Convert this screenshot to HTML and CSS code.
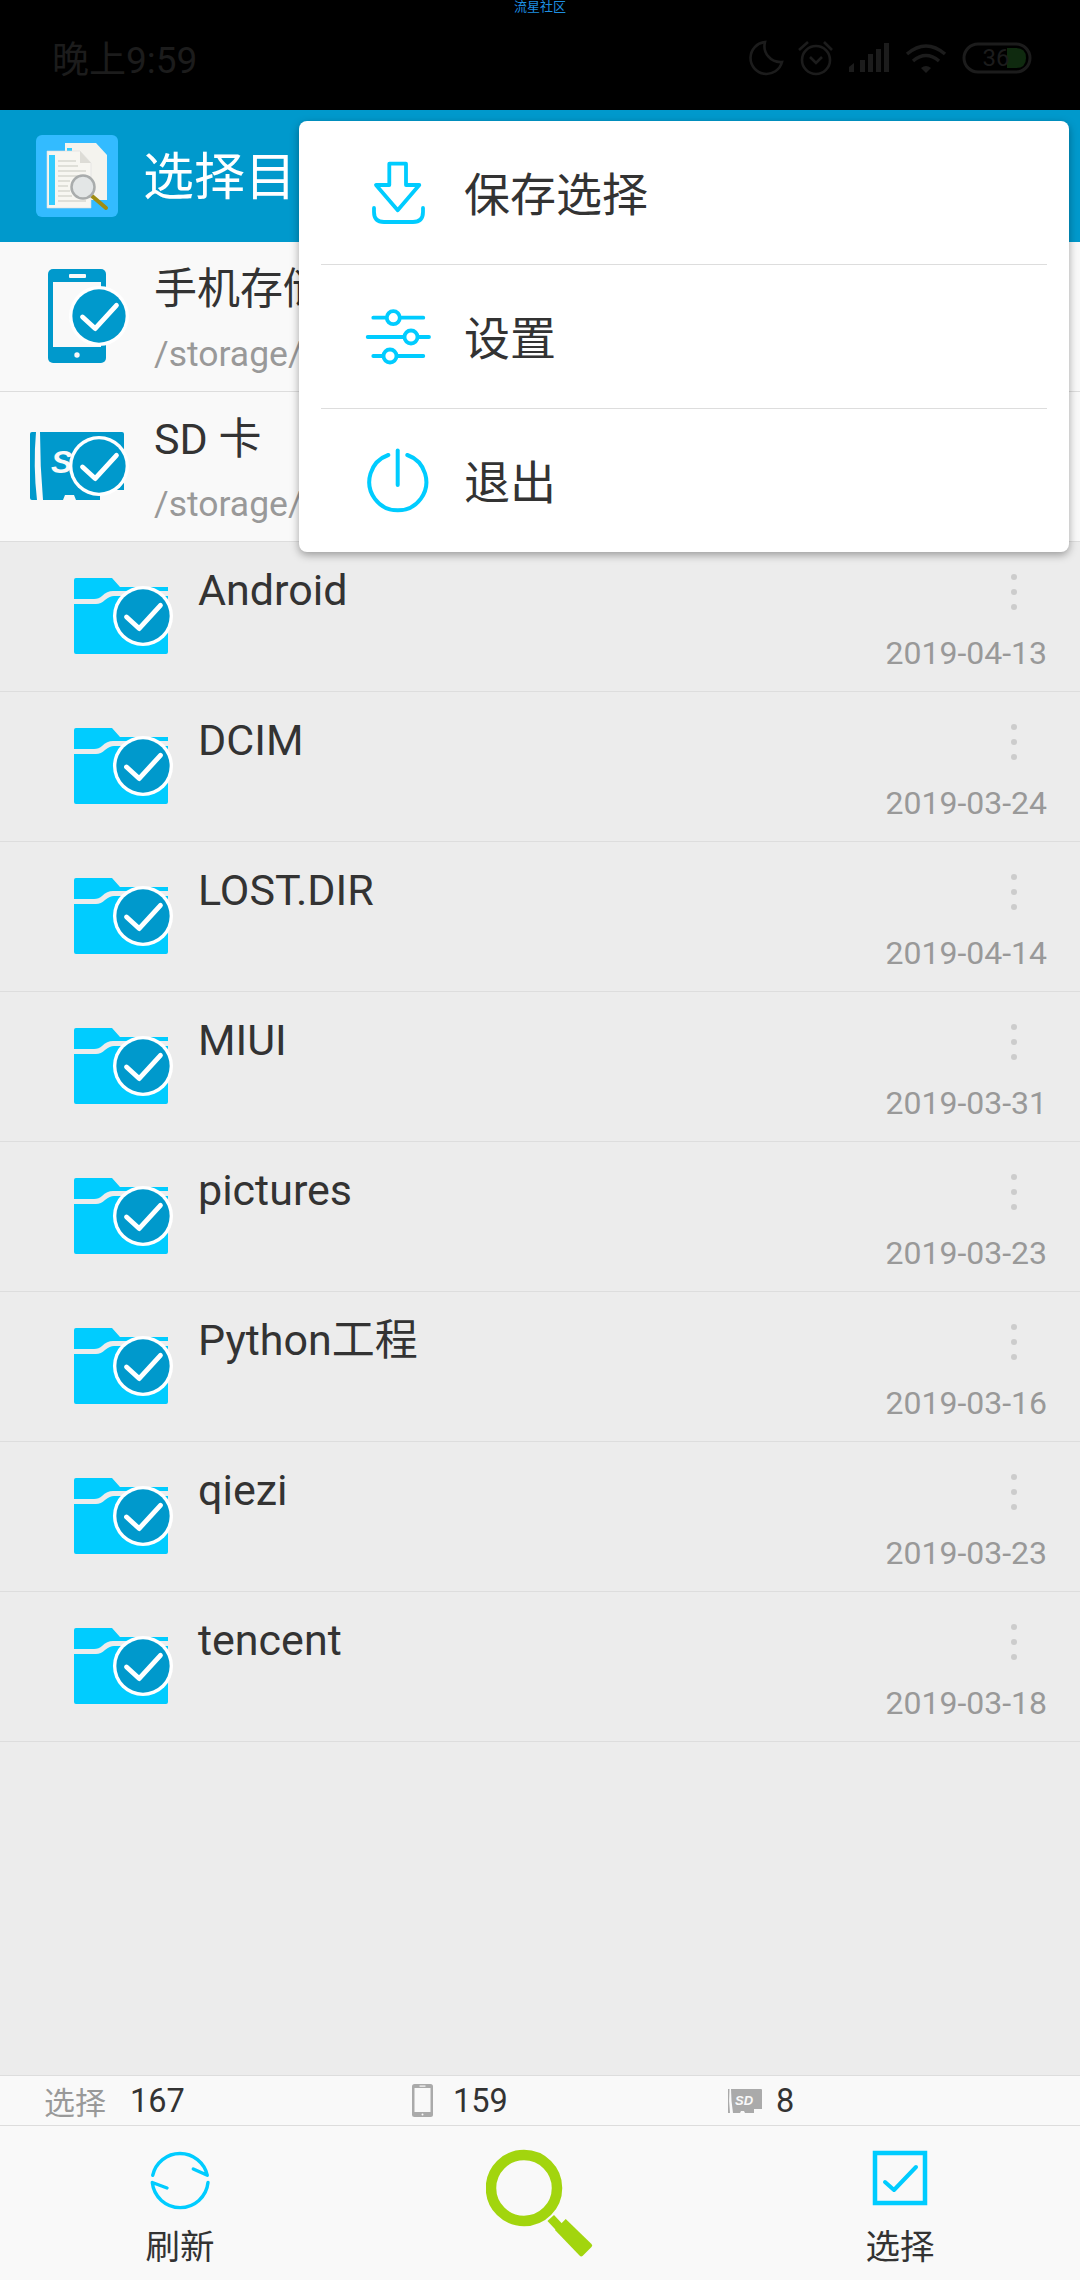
FILE: index.html
```html
<!DOCTYPE html>
<html lang="zh">
    <head>
        <meta charset="UTF-8">
        <meta name="viewport" content="width=device-width, initial-scale=1.0">
        <title>选择目录</title>
        <link rel="stylesheet" href="styles.css">
    </head>
    <body>
        <svg class="defs" width="0" height="0">
            <symbol id="badge" viewBox="-32 -32 64 64">
                <circle r="31" fill="#fff"/>
                <circle r="27.5" fill="#0099cc"/>
                <path d="M-17 1L-4 13L18-11" fill="none" stroke="#fff" stroke-width="5" stroke-linecap="round" stroke-linejoin="round"/>
            </symbol>
            <symbol id="folder" viewBox="0 0 100 76">
                <path d="M0 2Q0 0 2 0H38L46 9H94V13H39Q33 13 28 18Q25 21 20 21H0Z" fill="#00ccff"/>
                <path d="M0 26H22Q27 26 31 22Q36 18 40 18H94V74Q94 76 92 76H2Q0 76 0 74Z" fill="#00ccff"/>
                <use href="#badge" x="38" y="7" width="62" height="62"/>
            </symbol>
            <symbol id="dots" viewBox="0 0 6 36">
                <circle cx="3" cy="3" r="3" fill="#ccc"/>
                <circle cx="3" cy="18" r="3" fill="#ccc"/>
                <circle cx="3" cy="33" r="3" fill="#ccc"/>
            </symbol>
        </svg>

        <!--Status bar-->
        <div class="statusbar">
            <div class="carrier">流星社区</div>
            <div class="status-row">
                <span class="clock">晚上9:59</span>
                <svg class="status-icons" width="320" height="60" viewBox="0 0 320 60">
                    <g fill="none" stroke="#1c1c1c" stroke-width="2.6">
                        <path d="M35 12A16 16 0 1 0 52 32A16 16 0 0 1 35 12Z"/>
                        <circle cx="86" cy="30" r="14"/>
                        <path d="M69 20L78 12M94 12L102 20M80 27L86 33L92 27"/>
                        <path d="M177 24Q196 8 215 24M183 31Q196 20 209 31" stroke-width="3.5"/>
                        <rect x="234" y="14" width="66" height="28" rx="14" stroke-width="3"/>
                    </g>
                    <g fill="#1c1c1c">
                        <path d="M119 42V37L124 33V42Z"/>
                        <rect x="130" y="30" width="5" height="12"/>
                        <rect x="138" y="24" width="5" height="18"/>
                        <rect x="146" y="19" width="5" height="23"/>
                        <rect x="154" y="13" width="5" height="29"/>
                        <path d="M191 38L196 43L201 38Q196 34 191 38Z"/>
                    </g>
                    <path d="M277 18H286Q296 18 296 28Q296 38 286 38H277Z" fill="#0f2a0f"/>
                    <text x="266" y="36" class="battery-text">36</text>
                </svg>
            </div>
        </div>

        <!--Header-->
        <header class="header">
            <svg class="app-icon" width="82" height="82" viewBox="0 0 82 82">
                <rect width="82" height="82" rx="6" fill="#33bbff"/>
                <path d="M29 8H60L71 20V65H29Z" fill="#f4f3ee"/>
                <rect x="31" y="13" width="5" height="10" fill="#33ccff"/>
                <path d="M11 16H44L55 28V73H11Z" fill="#f7f6f1" stroke="#ddd" stroke-width=".6"/>
                <path d="M44 16V28H55Z" fill="#dddcd6"/>
                <rect x="13" y="20" width="6" height="50" fill="#33ccff"/>
                <path d="M22 26H40M22 31H42M22 36H50M22 41H50M22 46H34M22 51H32M22 56H34M22 61H36M22 66H50" stroke="#d8d7d0" stroke-width="1.5"/>
                <path d="M56 61L70 73" stroke="#a08c10" stroke-width="4" stroke-linecap="round"/>
                <circle cx="47" cy="52" r="11.5" fill="#dfe3e4" fill-opacity=".85" stroke="#a9acac" stroke-width="2.5"/>
            </svg>
            <span class="title">选择目录</span>
        </header>

        <!--Storage roots-->
        <div class="drive">
            <svg class="drive-icon" width="100" height="96" viewBox="0 0 100 96">
                <rect x="18" y="1" width="58" height="94" rx="5" fill="#0099cc"/>
                <rect x="23" y="14" width="48" height="65" fill="#f9f9f9"/>
                <rect x="39" y="6" width="17" height="4" rx="1" fill="#f9f9f9"/>
                <circle cx="47" cy="87" r="2.7" fill="#f9f9f9"/>
                <use href="#badge" x="38" y="17" width="62" height="62"/>
            </svg>
            <div class="drive-text">
                <div class="name">手机存储</div>
                <div class="path">/storage/emulated/0</div>
            </div>
        </div>
        <div class="drive">
            <svg class="drive-icon" width="100" height="96" viewBox="0 0 100 96">
                <path d="M2 14H6Q3 48 7 82H2Q0 82 0 80V16Q0 14 2 14Z" fill="#0099cc"/>
                <path d="M10 14H92Q94 14 94 16V72H70V82H46L44 77H35L33 82H13Q10 48 10 14Z" fill="#0099cc"/>
                <text x="21" y="55" class="sd-text">SD</text>
                <use href="#badge" x="38" y="17" width="62" height="62"/>
            </svg>
            <div class="drive-text">
                <div class="name">SD 卡</div>
                <div class="path">/storage/sdcard1</div>
            </div>
        </div>

        <!--Folder list-->
        <div class="list">
            <div class="row">
                <svg class="folder-icon"><use href="#folder"/></svg>
                <div class="name">Android</div>
                <div class="meta"><svg class="dots"><use href="#dots"/></svg><span class="date">2019-04-13</span></div>
            </div>
            <div class="row">
                <svg class="folder-icon"><use href="#folder"/></svg>
                <div class="name">DCIM</div>
                <div class="meta"><svg class="dots"><use href="#dots"/></svg><span class="date">2019-03-24</span></div>
            </div>
            <div class="row">
                <svg class="folder-icon"><use href="#folder"/></svg>
                <div class="name">LOST.DIR</div>
                <div class="meta"><svg class="dots"><use href="#dots"/></svg><span class="date">2019-04-14</span></div>
            </div>
            <div class="row">
                <svg class="folder-icon"><use href="#folder"/></svg>
                <div class="name">MIUI</div>
                <div class="meta"><svg class="dots"><use href="#dots"/></svg><span class="date">2019-03-31</span></div>
            </div>
            <div class="row">
                <svg class="folder-icon"><use href="#folder"/></svg>
                <div class="name">pictures</div>
                <div class="meta"><svg class="dots"><use href="#dots"/></svg><span class="date">2019-03-23</span></div>
            </div>
            <div class="row">
                <svg class="folder-icon"><use href="#folder"/></svg>
                <div class="name">Python工程</div>
                <div class="meta"><svg class="dots"><use href="#dots"/></svg><span class="date">2019-03-16</span></div>
            </div>
            <div class="row">
                <svg class="folder-icon"><use href="#folder"/></svg>
                <div class="name">qiezi</div>
                <div class="meta"><svg class="dots"><use href="#dots"/></svg><span class="date">2019-03-23</span></div>
            </div>
            <div class="row">
                <svg class="folder-icon"><use href="#folder"/></svg>
                <div class="name">tencent</div>
                <div class="meta"><svg class="dots"><use href="#dots"/></svg><span class="date">2019-03-18</span></div>
            </div>
        </div>

        <!--Counters-->
        <div class="stats">
            <div class="stat stat-first"><span class="stat-label">选择</span><span>167</span></div>
            <div class="stat">
                <svg width="21" height="33" viewBox="0 0 21 33">
                    <rect width="21" height="33" rx="2.5" fill="#aaa"/>
                    <rect x="2.5" y="4" width="16" height="24" fill="#f9f9f9"/>
                    <rect x="7.5" y="1.5" width="6" height="1.2" fill="#f9f9f9"/>
                    <circle cx="10.5" cy="30.5" r="1" fill="#f9f9f9"/>
                </svg>
                <span>159</span>
            </div>
            <div class="stat stat-sd">
                <svg width="34" height="26" viewBox="0 0 34 26">
                    <path d="M0 1H1.5Q.5 12 2 25H0Z" fill="#aaa"/>
                    <path d="M3 1H33Q34 1 34 2V21H26V25H17L16 23H13L12 25H5Q3 12 3 1Z" fill="#aaa"/>
                    <text x="7" y="17" class="sd-small">SD</text>
                </svg>
                <span>8</span>
            </div>
        </div>

        <!--Bottom buttons-->
        <nav class="toolbar">
            <div class="tool">
                <svg width="66" height="66" viewBox="0 0 66 66" fill="none" stroke="#00ccff" stroke-width="3.4" stroke-linecap="round" stroke-linejoin="round">
                    <path d="M5.7 30.3A28 28 0 0 1 60.3 30.3L46.3 24"/>
                    <path d="M61 37.5A28 28 0 0 1 5.3 37.5L20 43"/>
                </svg>
                <span class="tool-label">刷新</span>
            </div>
            <div class="tool tool-search">
                <svg width="108" height="108" viewBox="0 0 108 108">
                    <circle cx="38" cy="39" r="33" fill="none" stroke="#a2d50e" stroke-width="10.5"/>
                    <path d="M64.7 69L76 81" stroke="#a2d50e" stroke-width="9"/>
                    <path d="M79.7 70L105.5 95Q107 96.5 105.5 98L96.5 107Q95 108 93.5 106.5L69 81Z" fill="#a2d50e"/>
                </svg>
            </div>
            <div class="tool">
                <svg width="66" height="66" viewBox="0 0 66 66" fill="none" stroke="#00ccff" stroke-width="4">
                    <rect x="8" y="8" width="50" height="50" stroke-width="4.5"/>
                    <path d="M18 37L27 45L49 22" stroke-linecap="round" stroke-linejoin="round"/>
                </svg>
                <span class="tool-label">选择</span>
            </div>
        </nav>

        <!--Popup menu-->
        <div class="menu">
            <div class="menu-item">
                <svg width="66" height="66" viewBox="0 0 66 66" fill="none" stroke="#00ccff" stroke-width="3.8" stroke-linecap="round" stroke-linejoin="round">
                    <path d="M24.3 3.7H41V25H54.3L32.7 50.3L11 25H24.3Z"/>
                    <path d="M9 48V52Q9 62 19 62H48Q58 62 58 52V48"/>
                </svg>
                <span class="menu-label">保存选择</span>
            </div>
            <div class="menu-item">
                <svg width="66" height="66" viewBox="0 0 66 66" fill="#fff" stroke="#00ccff" stroke-width="3.8" stroke-linecap="round">
                    <path d="M8.3 13.7H58.3M2.7 33H64M8.3 52H58.3"/>
                    <circle cx="28.3" cy="13.7" r="6.5"/>
                    <circle cx="46" cy="33" r="6.5"/>
                    <circle cx="25" cy="52" r="6.5"/>
                </svg>
                <span class="menu-label">设置</span>
            </div>
            <div class="menu-item">
                <svg width="66" height="66" viewBox="0 0 66 66" fill="none" stroke="#00ccff" stroke-width="4" stroke-linecap="round">
                    <path d="M23.3 7A28.5 28.5 0 1 0 42.3 7"/>
                    <path d="M32.7 2.5V37"/>
                </svg>
                <span class="menu-label">退出</span>
            </div>
        </div>
    </body>
</html>
```

FILE: styles.css
```css
*{
    box-sizing: border-box;
}
body{
    margin: 0;
    width: 1080px;
    height: 2280px;
    display: flex;
    flex-direction: column;
    position: relative;
    overflow: hidden;
    background: #ececec;
    color: #333;
    font-family: Roboto, "Noto Sans CJK SC", sans-serif;
}
.defs{
    position: absolute;
}

/* status bar */
.statusbar{
    height: 110px;
    flex: none;
    background: #000;
}
.carrier{
    height: 14px;
    text-align: center;
    color: #1e8fe0;
    font-size: 13px;
    line-height: 13px;
}
.status-row{
    display: flex;
    justify-content: space-between;
    padding: 16px 30px 0 52px;
}
.clock{
    color: #1c1c1c;
    font-size: 37px;
    line-height: 62px;
}
.battery-text{
    fill: #1c1c1c;
    font-size: 24px;
    text-anchor: middle;
}

/* header */
.header{
    height: 132px;
    flex: none;
    display: flex;
    align-items: center;
    padding-left: 36px;
    background: #0099cc;
}
.title{
    margin-left: 25px;
    padding-top: 4px;
    color: #fff;
    font-size: 51px;
    line-height: 60px;
}

/* storage rows */
.drive{
    height: 150px;
    flex: none;
    display: flex;
    padding: 16px 0 0 30px;
    background: #f9f9f9;
    border-bottom: 1px solid #ddd;
}
.drive-icon{
    margin-top: 10px;
}
.drive-text{
    margin-left: 24px;
    padding-top: 1px;
}
.name{
    font-size: 43px;
    line-height: 60px;
}
.path{
    margin-top: 10px;
    color: #999;
    font-size: 35.5px;
    line-height: 50px;
}
.sd-text{
    fill: #f9f9f9;
    font-family: "Liberation Sans", sans-serif;
    font-size: 32px;
    font-style: italic;
    font-weight: bold;
}

/* folder rows */
.list{
    flex: 1;
}
.row{
    height: 150px;
    display: flex;
    padding: 18px 33px 0 74px;
    border-bottom: 1px solid #ddd;
}
.folder-icon{
    width: 100px;
    height: 76px;
    margin-top: 18px;
}
.row .name{
    margin-left: 24px;
}
.meta{
    margin-left: auto;
    display: flex;
    flex-direction: column;
    align-items: flex-end;
}
.dots{
    width: 6px;
    height: 36px;
    margin: 14px 30px 0 0;
}
.date{
    margin-top: 23px;
    color: #999;
    font-size: 32px;
    line-height: 40px;
}

/* counters */
.stats{
    height: 51px;
    flex: none;
    display: grid;
    grid-template-columns: 368px 316px 1fr;
    padding-left: 44px;
    background: #f9f9f9;
    border-top: 1px solid #ddd;
    border-bottom: 1px solid #ddd;
    font-size: 32.5px;
}
.stat{
    display: flex;
    align-items: center;
    gap: 20px;
}
.stat-first{
    gap: 24px;
}
.stat-sd{
    gap: 14px;
}
.stat-label{
    color: #999;
    font-size: 31px;
}
.sd-small{
    fill: #f9f9f9;
    font-family: "Liberation Sans", sans-serif;
    font-size: 13px;
    font-style: italic;
    font-weight: bold;
}

/* bottom buttons */
.toolbar{
    height: 154px;
    flex: none;
    display: grid;
    grid-template-columns: repeat(3, 1fr);
    background: #f9f9f9;
}
.tool{
    display: flex;
    flex-direction: column;
    align-items: center;
    padding-top: 19px;
}
.tool-search{
    padding-top: 23px;
}
.tool-label{
    margin-top: 14px;
    font-size: 34.5px;
    line-height: 44px;
}

/* popup menu */
.menu{
    position: absolute;
    left: 299px;
    top: 121px;
    width: 770px;
    height: 431px;
    background: #fff;
    border-radius: 8px;
    box-shadow: 0 3px 8px rgba(0,0,0,0.35);
}
.menu-item{
    height: 144px;
    display: flex;
    align-items: center;
    gap: 33px;
    margin: 0 22px;
    padding-left: 44px;
    border-bottom: 1px solid #ddd;
    font-size: 46px;
}
.menu-item:last-child{
    border-bottom: none;
}
.menu-label{
    padding-bottom: 4px;
}
```
